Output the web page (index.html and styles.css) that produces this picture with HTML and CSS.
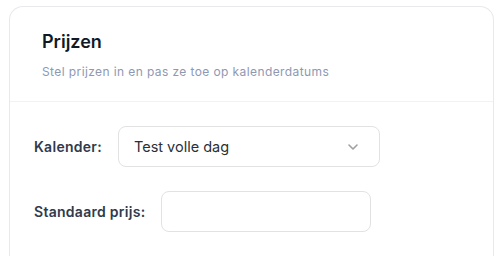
FILE: index.html
```html
<!DOCTYPE html>
<html lang="nl">
<head>
  <meta charset="UTF-8" />
  <meta name="viewport" content="width=device-width, initial-scale=1" />
  <title>Prijzen</title>
  <link rel="stylesheet" href="styles.css">
</head>
<body>
  <div class="card">
    <div class="card-header">
      <h2>Prijzen</h2>
      <div class="subtitle">Stel prijzen in en pas ze toe op kalenderdatums</div>
    </div>

    <div class="card-body">
      <div class="row">
        <label for="calendar">Kalender:</label>
        <div class="select" id="calendar">
          <span>Test volle dag</span>
          <svg class="chevron" width="12" height="8" viewBox="0 0 12 8" fill="none">
            <path d="M2 2l4 4 4-4" stroke="#a0a0a0" stroke-width="1.6" stroke-linecap="round" stroke-linejoin="round"/>
          </svg>
        </div>
      </div>
      <div class="row">
        <label for="price">Standaard prijs:</label>
        <input type="text" id="price" class="input" />
      </div>
    </div>
  </div>
</body>
</html>
```

FILE: styles.css
```css
html, body {
  margin: 0;
  padding: 0;
  background: #fff;
  font-family: Inter, 'Noto Sans', sans-serif;
}
body {
  padding: 6px 5px 0 9px;
}
.card {
  border: 1px solid #e8e9ec;
  border-bottom: none;
  border-radius: 14px 14px 0 0;
  height: 260px;
  background: #fff;
}
.card-header {
  padding: 23px 32px 21px 32px;
  border-bottom: 1px solid #f1f2f4;
}
.card-header h2 {
  margin: 0;
  font-size: 18px;
  font-weight: 600;
  color: #111827;
  line-height: 24px;
}
.subtitle {
  margin-top: 10px;
  font-size: 12px;
  letter-spacing: 0.4px;
  color: #8e98b3;
  line-height: 16px;
}
.card-body {
  padding: 24px 24px;
  display: flex;
  flex-direction: column;
  gap: 24px;
}
.row {
  display: flex;
  align-items: center;
  gap: 16px;
}
.row label {
  font-size: 14px;
  font-weight: 600;
  letter-spacing: 0.28px;
  color: #2f3a4c;
}
.select {
  width: 262px;
  height: 41px;
  box-sizing: border-box;
  border: 1px solid #e2e2e2;
  border-radius: 8px;
  display: flex;
  align-items: center;
  justify-content: space-between;
  padding: 0 20px 0 15px;
  font-size: 14.5px;
  color: #2b2f36;
}
.input {
  width: 210px;
  height: 41px;
  box-sizing: border-box;
  border: 1px solid #e2e2e2;
  border-radius: 8px;
  outline: none;
  font-size: 15px;
  padding: 0 12px;
}
```
